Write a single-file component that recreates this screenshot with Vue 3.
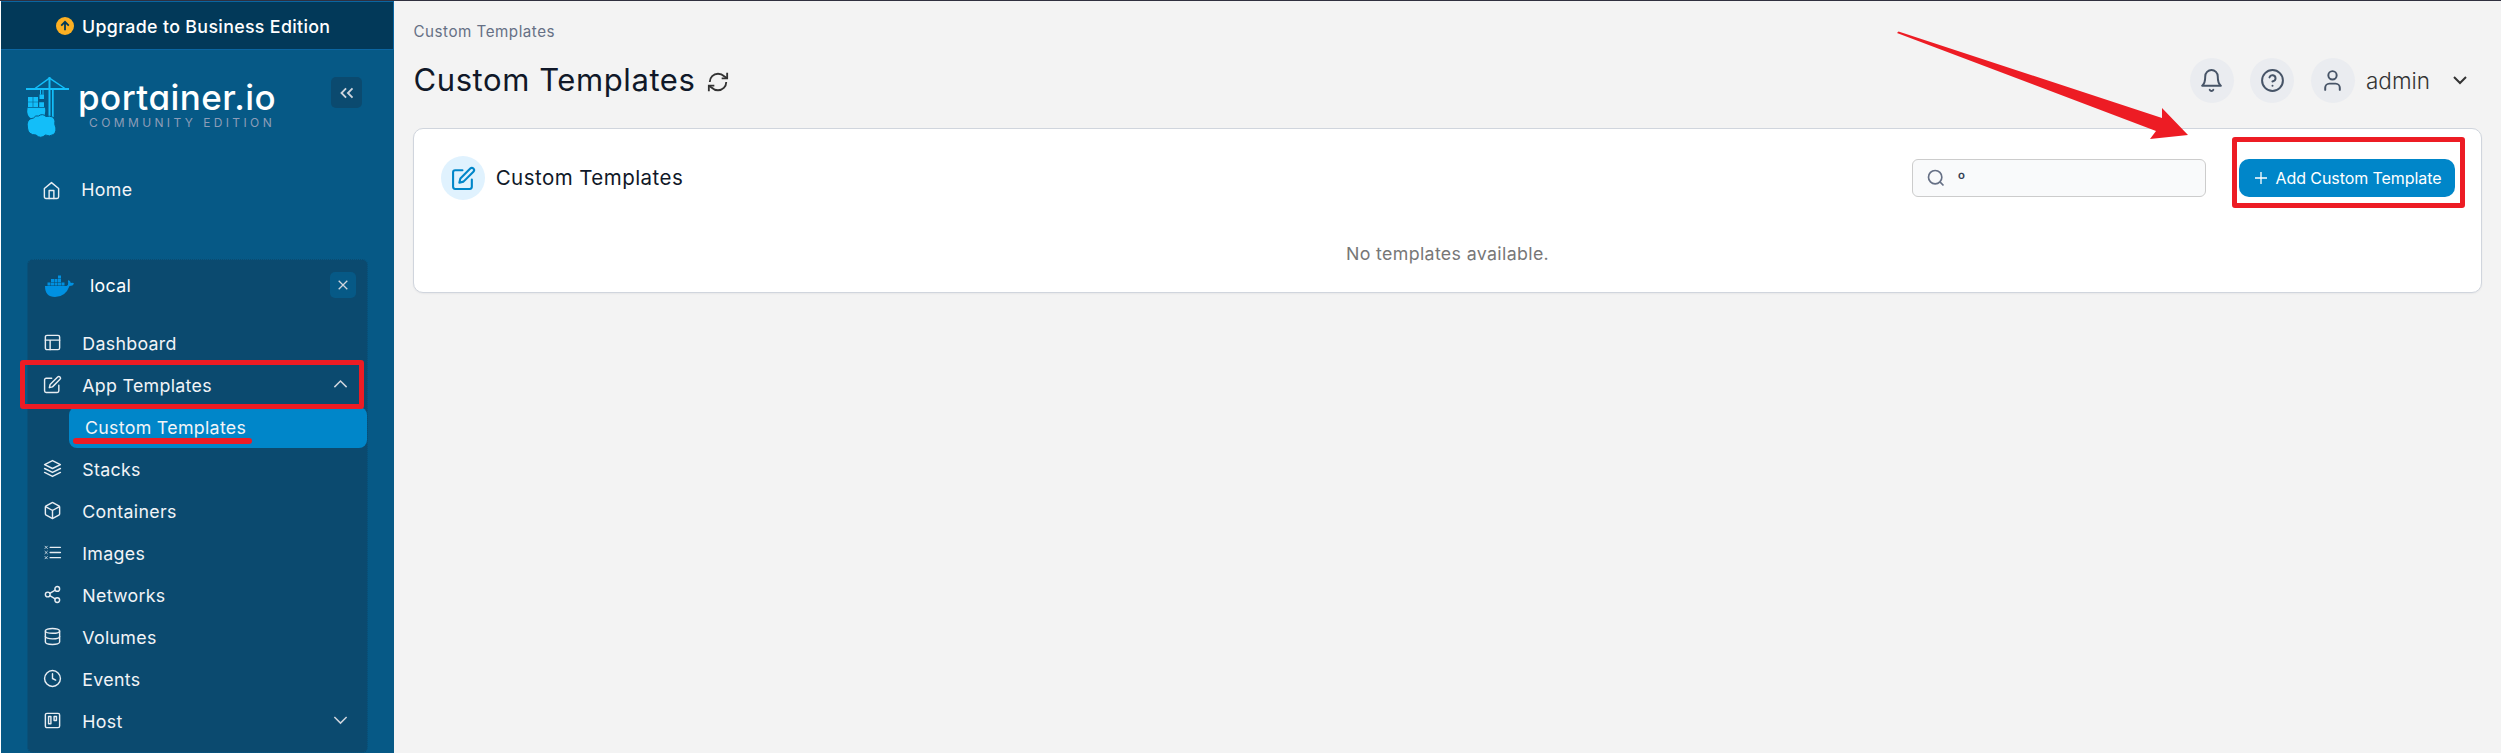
<script setup>
const icons = {
  dashboard: '<rect x="3" y="3" width="18" height="18" rx="2"/><path d="M3 9h18M9 21V9"/>',
  edit: '<path d="M11 4H4a2 2 0 0 0-2 2v14a2 2 0 0 0 2 2h14a2 2 0 0 0 2-2v-7"/><path d="M18.5 2.5a2.121 2.121 0 0 1 3 3L12 15l-4 1 1-4Z"/>',
  stacks: '<path d="m12 2 10 5-10 5L2 7Z"/><path d="m2 12 10 5 10-5M2 17l10 5 10-5"/>',
  box: '<path d="M21 16V8a2 2 0 0 0-1-1.73l-7-4a2 2 0 0 0-2 0l-7 4A2 2 0 0 0 3 8v8a2 2 0 0 0 1 1.73l7 4a2 2 0 0 0 2 0l7-4A2 2 0 0 0 21 16Z"/><path d="m3.3 7 8.7 5 8.7-5M12 22V12"/>',
  list: '<path d="M9 5.500h13M9 12h13M9 18.500h13"/><path stroke-width="1" d="m2.500 4 3 3m0-3-3 3M2.500 10.500l3 3m0-3-3 3M2.500 17l3 3m0-3-3 3"/>',
  share: '<circle cx="18" cy="5" r="3"/><circle cx="6" cy="12" r="3"/><circle cx="18" cy="19" r="3"/><path d="m8.6 13.5 6.8 4M15.4 6.5l-6.8 4"/>',
  database: '<ellipse cx="12" cy="5" rx="9" ry="3"/><path d="M21 12c0 1.66-4 3-9 3s-9-1.34-9-3"/><path d="M3 5v14c0 1.66 4 3 9 3s9-1.34 9-3V5"/>',
  clock: '<circle cx="12" cy="12" r="10"/><path d="M12 6v6l4 2"/>',
  host: '<rect x="3" y="3" width="18" height="18" rx="2"/><path d="M7 7h3v9H7zM14 7h3v5h-3z"/>',
}
const items = [
  { label: 'Dashboard', icon: 'dashboard' },
  { label: 'App Templates', icon: 'edit', chevron: 'm5 15 7-7 7 7', children: ['Custom Templates'] },
  { label: 'Stacks', icon: 'stacks' },
  { label: 'Containers', icon: 'box' },
  { label: 'Images', icon: 'list' },
  { label: 'Networks', icon: 'share' },
  { label: 'Volumes', icon: 'database' },
  { label: 'Events', icon: 'clock' },
  { label: 'Host', icon: 'host', chevron: 'm5 8 7 7 7-7' },
]
</script>

<template>
  <div class="page">
    <aside class="sidebar">
      <div class="upgrade">
        <svg class="up-icon" viewBox="0 0 18 18"><circle cx="9" cy="9" r="9" fill="#fdb022"/><path d="M9 13.2V5M5.2 8.6 9 4.8l3.8 3.8" fill="none" stroke="#023959" stroke-width="1.8"/></svg>
        <span>Upgrade to Business Edition</span>
      </div>
      <div class="brand">
        <svg class="logo" viewBox="0 0 256 64">
          <g fill="#13bef9">
            <path d="M0 12h43v2H0z"/>
            <path d="M22.500 1h2v42h-2zM26 13h1.700v28H26zM14 14h1v4.500h-1zM16.500 14h1v4.500h-1z"/>
            <path d="M2 21h4.700v4.700H2zM7.300 21H12v4.700H7.300zM13.500 18.500H18V23h-4.500zM2 26.300h4.700V31H2zM7.300 26.300H12V31H7.300zM13.200 26.300H18V31h-4.800z"/>
            <path d="M1.500 31.700h17.500q1.500 8-4 11.500H6Q0 40 1.500 31.700z"/>
          </g>
          <path d="M23.500 2.200 9 12.500M23.500 2.200l15.500 10.300" fill="none" stroke="#13bef9" stroke-width="1.500"/>
          <path d="M7.500 42q2-3 5-2 4-3 7.500.5 8-1.500 9 4.500-.500 3 0 4 2.500 6-1.500 9.500-4 2.500-8 .5-5 4.500-9.500 0-8 0-8.500-7Q-.5 43 7.500 42z" fill="#13bef9" stroke="#065986" stroke-width="1"/>
          <text class="wordmark" x="52" y="33.800" textLength="198">portainer.io</text>
          <text class="edition" x="63" y="51.300" textLength="183">COMMUNITY EDITION</text>
        </svg>
        <button class="collapse"><svg viewBox="0 0 24 24"><path d="m11 17-5-5 5-5M18 17l-5-5 5-5"/></svg></button>
      </div>
      <div class="home">
        <svg class="icon" viewBox="0 0 24 24"><path d="M3 9.500 12 2l9 7.500V20a2 2 0 0 1-2 2H5a2 2 0 0 1-2-2Z"/><path d="M9 22V12h6v10"/></svg>
        <span>Home</span>
      </div>
      <nav class="env">
        <div class="env-head">
          <svg class="whale" viewBox="0 0 29 22" fill="#0091e2"><path d="M0 11h21.500q2-.5 1.700-3.500-.8-1.500.3-2.500 2 1 2.300 3 2-.5 3.200.5-1 2.500-4.500 2.500Q20.500 22 10 22 0 22 0 11zM2.500 7.500h3v3h-3zM6 7.500h3v3H6zM9.500 7.500h3v3h-3zM13 7.500h3v3h-3zM16.500 7.500h3v3h-3zM6 4h3v3H6zM9.500 4h3v3h-3zM13 4h3v3h-3zM13 .5h3v3h-3z"/></svg>
          <span>local</span>
          <button class="close"><svg viewBox="0 0 10 10"><path d="m.7.700 8.600 8.600M9.300.700.700 9.300"/></svg></button>
        </div>
        <template v-for="item in items" :key="item.label">
          <div class="item" :class="{ marked: item.children }">
            <svg class="icon" viewBox="0 0 24 24" v-html="icons[item.icon]"></svg>
            <span>{{ item.label }}</span>
            <svg v-if="item.chevron" class="chevron" viewBox="0 0 24 24"><path :d="item.chevron"/></svg>
          </div>
          <div v-for="child in item.children" :key="child" class="sub"><span>{{ child }}</span></div>
        </template>
      </nav>
    </aside>

    <main class="main">
      <div class="crumb">Custom Templates</div>
      <header class="header">
        <h1>Custom Templates</h1>
        <svg class="refresh" viewBox="0 0 24 24"><path d="M3 12a9 9 0 0 1 9-9 9.750 9.750 0 0 1 6.740 2.740L22 8"/><path d="M22 2v6h-6M21 12a9 9 0 0 1-9 9 9.750 9.750 0 0 1-6.740-2.740L2 16"/><path d="M8 16H2v6"/></svg>
        <div class="user">
          <span class="round"><svg viewBox="0 0 24 24"><path d="M18 8A6 6 0 0 0 6 8c0 7-3 9-3 9h18s-3-2-3-9M10.300 21a1.940 1.940 0 0 0 3.400 0"/></svg></span>
          <span class="round"><svg viewBox="0 0 24 24"><circle cx="12" cy="12" r="10"/><path d="M9.090 9a3 3 0 0 1 5.830 1c0 2-3 3-3 3M12 17h.01"/></svg></span>
          <span class="round"><svg viewBox="0 0 24 24"><path d="M19 21v-2a4 4 0 0 0-4-4H9a4 4 0 0 0-4 4v2"/><circle cx="12" cy="7" r="4"/></svg></span>
          <span class="name">admin</span>
          <svg class="down" viewBox="0 0 14 8"><path d="m1 1 6 6 6-6"/></svg>
        </div>
      </header>
      <section class="card">
        <div class="toolbar">
          <span class="badge"><svg viewBox="0 0 24 24" v-html="icons.edit"></svg></span>
          <h2>Custom Templates</h2>
          <div class="search">
            <svg viewBox="0 0 24 24"><circle cx="11" cy="11" r="8"/><path d="m21 21-4.300-4.300"/></svg>
            <span>º</span>
          </div>
          <button class="add"><svg viewBox="0 0 12 12"><path d="M6 0v12M0 6h12"/></svg><span>Add Custom Template</span></button>
        </div>
        <p class="empty">No templates available.</p>
      </section>
      <svg class="arrow" viewBox="0 0 292 110"><path d="M1.500.5 265 87V77l26 27-38 4 6-8L0 2z" fill="#ed1c24"/></svg>
    </main>
  </div>
</template>

<style>
body { overflow: hidden; }
</style>

<style scoped>
*, *::after { box-sizing: border-box; }
.page { display: flex; width: 2501px; height: 753px; border-top: 1px solid #30303f; background: #f3f3f3; font-family: Inter, sans-serif; font-size: 17.8px; letter-spacing: .3px; font-optical-sizing: none; position: relative; }
svg { display: block; flex: none; overflow: visible; }
button { border: 0; padding: 0; font-family: inherit; }
.sidebar { width: 394px; height: 752px; border-left: 1px solid #fff; background: #065986; color: #f2f4f7; flex: none; }
.upgrade { height: 49px; background: #023959; border: 1px solid #0b65a0; border-left: 0; display: flex; align-items: center; padding-left: 55px; color: #fff; font-weight: 500; letter-spacing: .34px; }
.up-icon { width: 18px; height: 18px; margin-right: 8px; }
.upgrade span { margin-top: 2px; white-space: nowrap; }
.brand { height: 117px; padding: 26px 32px 0 25px; display: flex; }
.logo { width: 256px; height: 64px; }
.wordmark { font: 500 35px Inter, sans-serif; font-feature-settings: "cv11"; fill: #fff; }
.edition { font: 400 12px Inter, sans-serif; fill: #8d9db8; }
.collapse { width: 31px; height: 31px; border-radius: 5px; background: #0b4a6f; margin: 1px 0 0 auto; display: grid; place-items: center; }
.collapse svg { width: 22px; height: 22px; fill: none; stroke: #d0d5dd; stroke-width: 2; }
.icon { width: 19px; height: 19px; fill: none; stroke: #e8edf2; stroke-width: 1.8; stroke-linecap: round; stroke-linejoin: round; }
.home { height: 46px; display: flex; align-items: center; padding-left: 40.5px; }
.home span { margin: -1px 0 0 20.8px; }
.env { margin: 46px 0 0 26px; width: 341px; height: 494px; border: 1px dotted #065986; border-radius: 6px; background: #0b4a6f; }
.env-head { height: 61px; display: flex; align-items: flex-start; padding: 15px 11px 0 17px; color: #fff; }
.whale { width: 29px; height: 22px; }
.env-head span { margin: 0 0 0 16px; line-height: 21px; }
.close { width: 26px; height: 26px; border-radius: 5px; background: #065986; margin: -3px 0 0 auto; display: grid; place-items: center; }
.close svg { width: 10px; height: 10px; stroke: #d0d5dd; stroke-width: 1.300; }
.item { height: 42px; display: flex; align-items: center; padding: 0 16px 0 14.5px; position: relative; }
.item span { margin: 3px 0 0 20.8px; }
.chevron { width: 21px; height: 21px; margin-left: auto; fill: none; stroke: #d0d5dd; stroke-width: 1.700; }
.marked::after { content: ''; position: absolute; left: -8px; top: -3px; width: 344px; height: 49px; border: 5px solid #ed1c24; border-radius: 3px; z-index: 2; }
.sub { height: 41px; margin: 2px 0 -1px 41px; border-radius: 8px; background: #0086c9; padding-left: 16px; line-height: 42px; position: relative; }
.sub::after { content: ''; position: absolute; left: 4px; top: 31px; width: 179px; height: 6px; border-radius: 3px; background: #ed1c24; }
.main { flex: 1; padding: 0 19px; }
.crumb { font-size: 15.2px; letter-spacing: .5px; line-height: 22px; margin: 20px 0 0 .5px; color: #667085; }
.header { display: flex; align-items: center; height: 46px; margin-top: 14px; }
h1 { font-size: 31px; font-weight: 400; letter-spacing: .58px; margin: -1px 0 0 .5px; width: 282px; white-space: nowrap; color: #101828; line-height: 46px; }
.refresh { width: 22px; height: 22px; margin: 3px 0 0 11px; fill: none; stroke: #333; stroke-width: 2; }
.user { display: flex; align-items: center; margin-left: auto; padding-right: 15px; }
.round { width: 44px; height: 45px; border-radius: 50%; background: #eaecf0; display: grid; place-items: center; margin-right: 16.500px; }
.round svg { width: 25px; height: 25px; fill: none; stroke: #475467; stroke-width: 1.900; stroke-linecap: round; stroke-linejoin: round; }
.name { font-size: 22.500px; font-weight: 300; letter-spacing: 0; color: #333; margin-left: -5px; width: 87px; }
.down { width: 14px; height: 8px; fill: none; stroke: #333; stroke-width: 2; }
.card { height: 165px; margin-top: 25px; background: #fff; border: 1px solid #d0d5dd; border-radius: 10px; box-shadow: 0 1px 2px rgba(16, 24, 40, .05); }
.toolbar { height: 98px; display: flex; align-items: center; padding: 0 26px 0 27px; }
.badge { width: 44px; height: 44px; border-radius: 50%; background: #e0f2fe; display: grid; place-items: center; }
.badge svg { width: 25px; height: 25px; fill: none; stroke: #0086c9; stroke-width: 2; stroke-linecap: round; stroke-linejoin: round; }
h2 { font-size: 20.5px; font-weight: 400; letter-spacing: .45px; margin: -2px 0 0 10.7px; color: #101828; }
.search { width: 294px; height: 38px; border: 1px solid #ccc; border-radius: 6px; background: #f9fafb; margin: 0 33px 0 auto; display: flex; align-items: center; padding-left: 13px; }
.search svg { width: 20px; height: 20px; fill: none; stroke: #667085; stroke-width: 2; }
.search span { font-size: 17.500px; margin-left: 11.500px; color: #344054; }
.add { width: 216px; height: 38px; border-radius: 10px; background: #0086c9; color: #fff; display: flex; align-items: center; padding-left: 16px; position: relative; font-size: 16px; letter-spacing: -.08px; }
.add svg { width: 12px; height: 12px; stroke: #fff; stroke-width: 1.300; margin-right: 8.500px; }
.add span { white-space: nowrap; margin-top: -1px; }
.add::after { content: ''; position: absolute; left: -7px; top: -22px; width: 233px; height: 71px; border: 5px solid #ed1c24; border-radius: 3px; }
.empty { margin: 15px 0 0; text-align: center; line-height: 24px; color: #777; letter-spacing: .35px; }
.arrow { position: absolute; left: 1897px; top: 30px; width: 292px; height: 110px; }
</style>
